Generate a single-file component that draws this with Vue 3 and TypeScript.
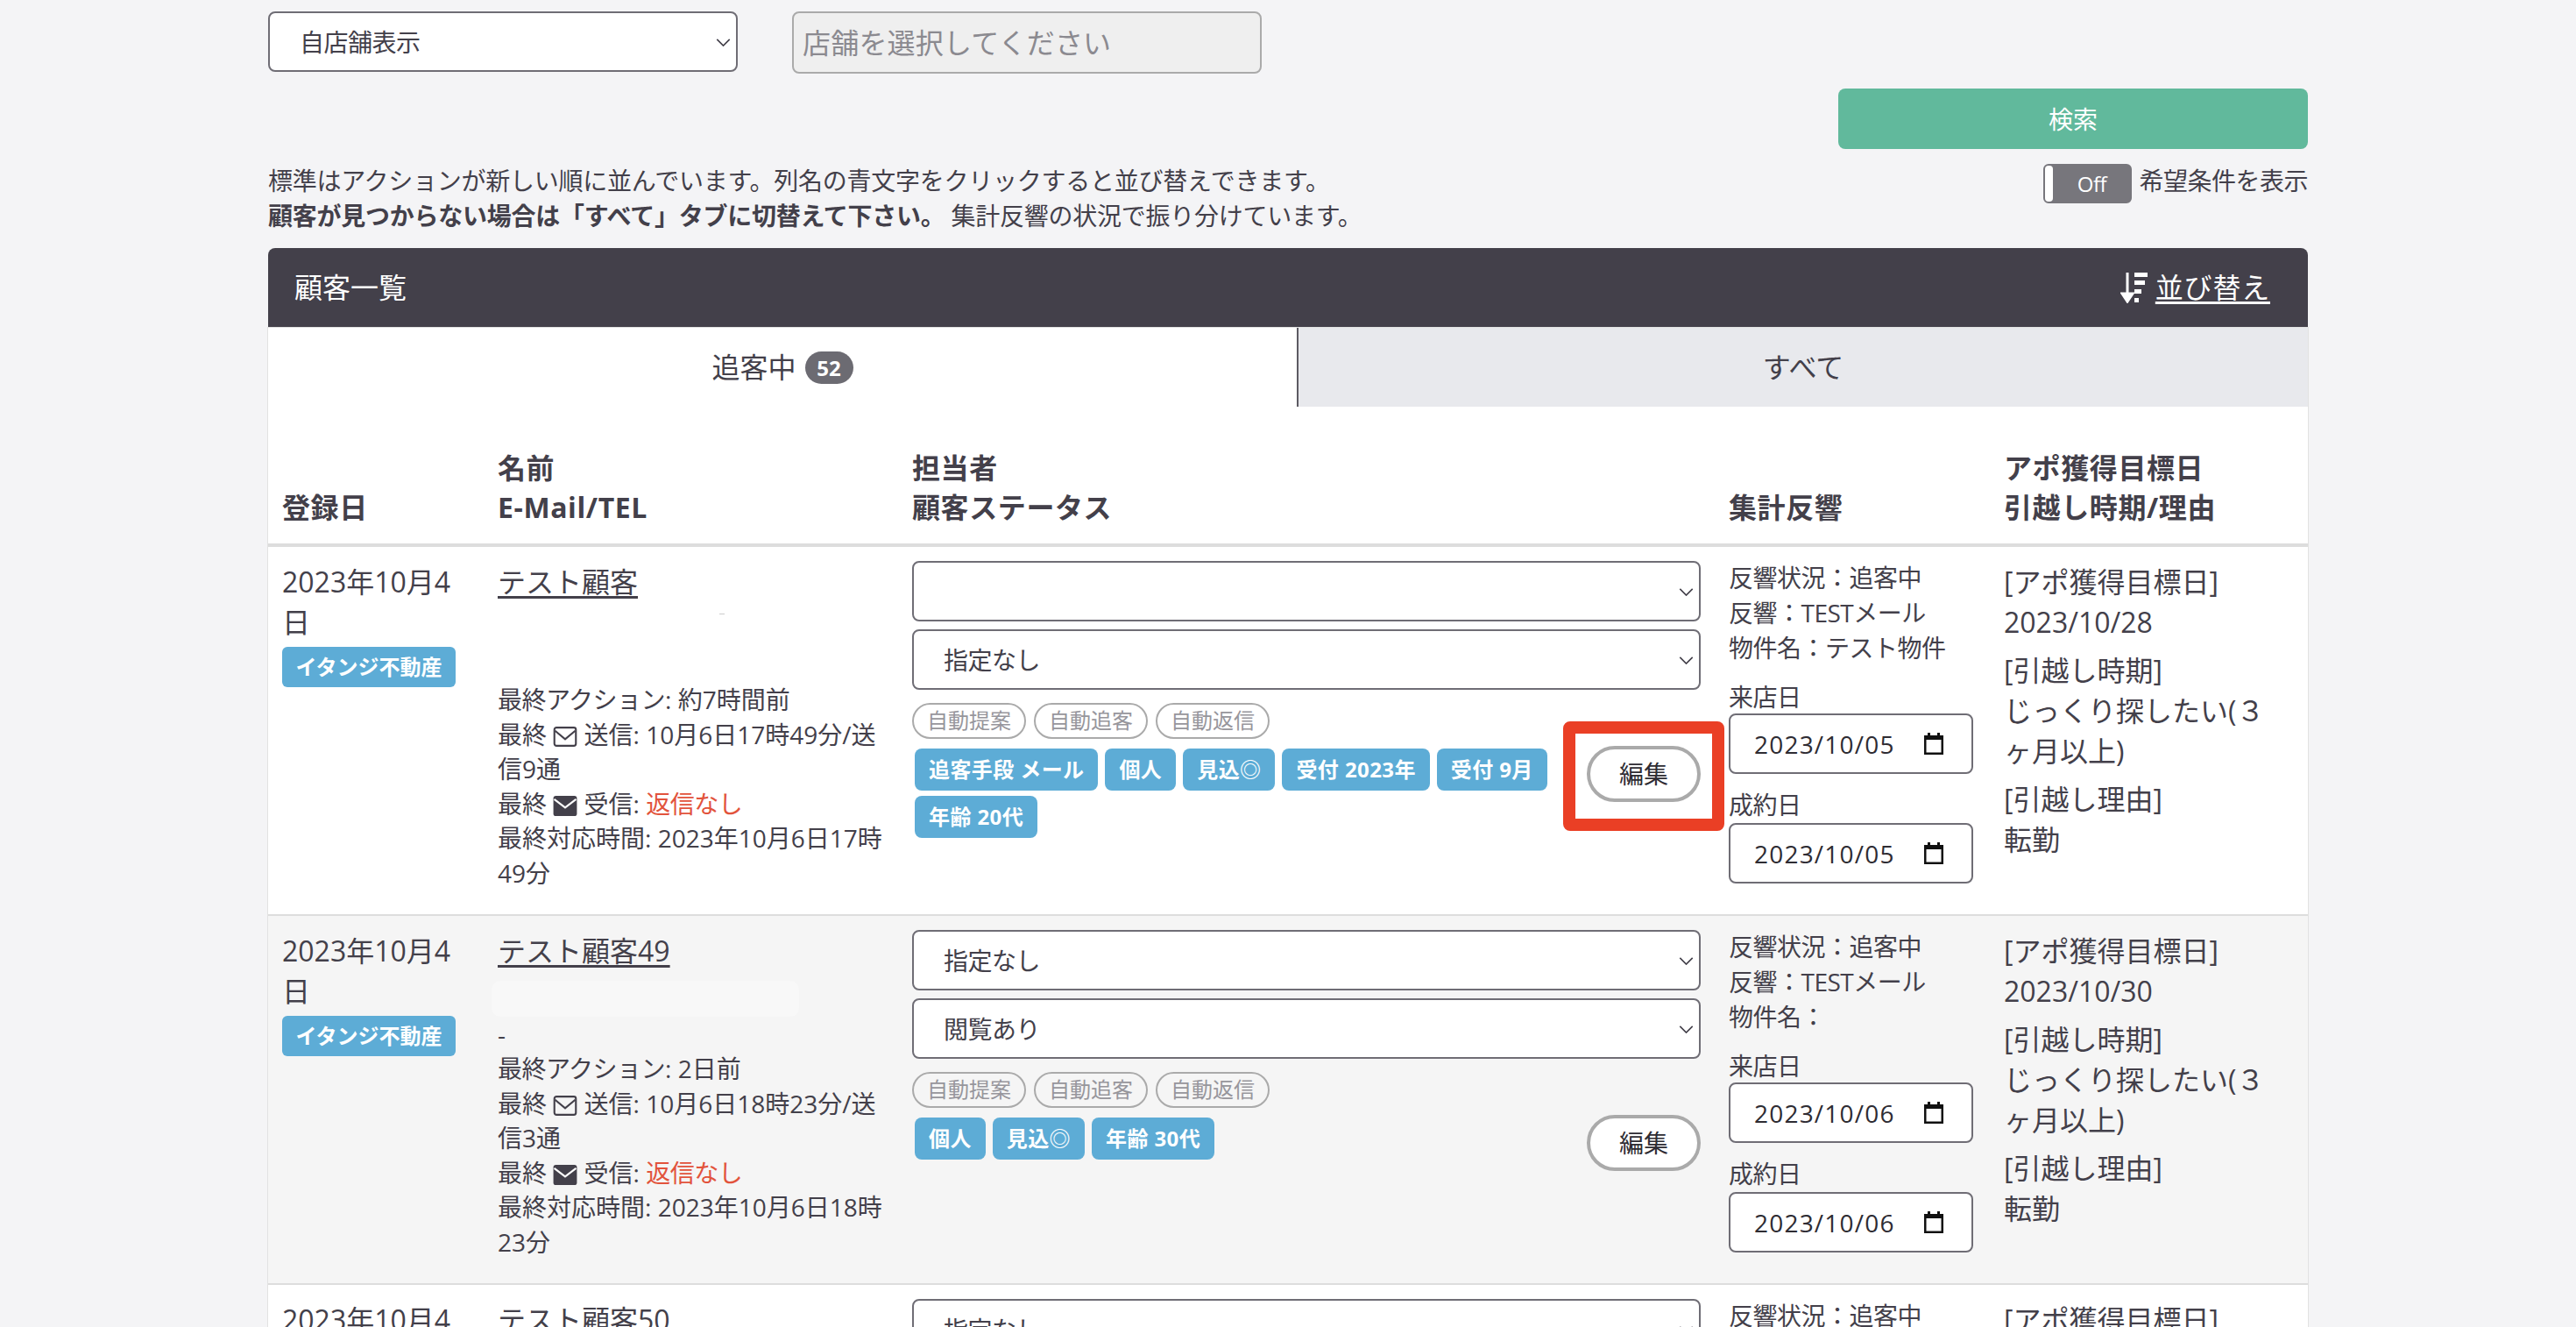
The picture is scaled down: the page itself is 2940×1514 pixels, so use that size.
<script setup lang="ts">
interface CustomerRow {
  date: string
  name: string
  tel: string
  masked: boolean
  action: string
  sent: string
  received: string
  staff: string
  status: string
  tags: string[]
  highlight: boolean
  property: string
  visit: string
  contract: string
  target: string
}

const autoLabels = ['自動提案', '自動追客', '自動返信']

const rows: CustomerRow[] = [
  {
    date: '2023年10月4日',
    name: 'テスト顧客',
    tel: '',
    masked: false,
    action: '約7時間前',
    sent: '10月6日17時49分/送信9通',
    received: '2023年10月6日17時49分',
    staff: '',
    status: '指定なし',
    tags: ['追客手段 メール', '個人', '見込◎', '受付 2023年', '受付 9月', '年齢 20代'],
    highlight: true,
    property: 'テスト物件',
    visit: '2023/10/05',
    contract: '2023/10/05',
    target: '2023/10/28',
  },
  {
    date: '2023年10月4日',
    name: 'テスト顧客49',
    tel: '-',
    masked: true,
    action: '2日前',
    sent: '10月6日18時23分/送信3通',
    received: '2023年10月6日18時23分',
    staff: '指定なし',
    status: '閲覧あり',
    tags: ['個人', '見込◎', '年齢 30代'],
    highlight: false,
    property: '',
    visit: '2023/10/06',
    contract: '2023/10/06',
    target: '2023/10/30',
  },
  {
    date: '2023年10月4日',
    name: 'テスト顧客50',
    tel: '-',
    masked: true,
    action: '2日前',
    sent: '10月6日18時23分/送信3通',
    received: '2023年10月6日18時23分',
    staff: '指定なし',
    status: '閲覧あり',
    tags: ['個人', '見込◎'],
    highlight: false,
    property: '',
    visit: '2023/10/06',
    contract: '2023/10/06',
    target: '2023/10/30',
  },
]
</script>

<template>
  <div class="page">
    <div class="filters">
      <div class="select-wrap filter-select">
        <select class="select">
          <option>自店舗表示</option>
        </select>
        <svg class="chevron" viewBox="0 0 18 10"><path d="M1 1l8 8 8-8" /></svg>
      </div>
      <input class="shop-input" placeholder="店舗を選択してください" disabled />
    </div>

    <div class="search-row">
      <button type="button" class="search-btn">検索</button>
    </div>

    <div class="info-row">
      <div class="notes">
        <div>標準はアクションが新しい順に並んでいます。列名の青文字をクリックすると並び替えできます。</div>
        <div><strong>顧客が見つからない場合は「すべて」タブに切替えて下さい。</strong> 集計反響の状況で振り分けています。</div>
      </div>
      <div class="toggle-wrap">
        <div class="toggle"><span class="toggle-knob"></span><span class="toggle-text">Off</span></div>
        <span>希望条件を表示</span>
      </div>
    </div>

    <div class="panel-head">
      <span>顧客一覧</span>
      <a class="sort-link">
        <svg class="sort-icon" viewBox="0 0 32 36">
          <path d="M8 1v28M2 25l6 9 6-9z" />
          <rect x="16" y="1" width="15" height="5" />
          <rect x="16" y="10" width="12" height="5" />
          <rect x="16" y="20" width="8" height="5" />
          <rect x="16" y="30" width="5" height="5" />
        </svg>
        <span class="sort-text">並び替え</span>
      </a>
    </div>

    <div class="panel-body">
      <div class="tabs">
        <div class="tab tab-active">追客中 <span class="badge">52</span></div>
        <div class="tab">すべて</div>
      </div>

      <div class="grid head">
        <div>登録日</div>
        <div>名前<br />E-Mail/TEL</div>
        <div>担当者<br />顧客ステータス</div>
        <div>集計反響</div>
        <div>アポ獲得目標日<br />引越し時期/理由</div>
      </div>

      <div v-for="(row, i) in rows" :key="row.name" class="grid row" :class="{ 'row-alt': i % 2 === 1 }">
        <div class="cell-large">
          <div>{{ row.date }}</div>
          <span class="shop-tag">イタンジ不動産</span>
        </div>

        <div>
          <div class="name-line"><a class="name">{{ row.name }}</a></div>
          <div class="contact" :class="{ 'contact-masked': row.masked }">
            <span class="mask"></span>
            <div v-if="row.tel">{{ row.tel }}</div>
          </div>
          <div class="history">
            <div><span class="wide">最終アクション</span>: {{ row.action }}</div>
            <div>
              最終
              <svg class="mail" viewBox="0 0 28 24"><rect x="1.2" y="1.2" width="25.6" height="21.6" rx="2.5" /><path d="M2 5l12 10 12-10" /></svg>
              送信: {{ row.sent }}
            </div>
            <div>
              最終
              <svg class="mail mail-solid" viewBox="0 0 28 24"><rect x="0" y="0" width="28" height="24" rx="3" /><path d="M1 4l13 10 13-10" /></svg>
              受信: <span class="no-reply wide">返信なし</span>
            </div>
            <div>最終対応時間: {{ row.received }}</div>
          </div>
        </div>

        <div class="status-cell">
          <div class="select-wrap">
            <select class="select"><option>{{ row.staff }}</option></select>
            <svg class="chevron" viewBox="0 0 18 10"><path d="M1 1l8 8 8-8" /></svg>
          </div>
          <div class="select-wrap second">
            <select class="select"><option>{{ row.status }}</option></select>
            <svg class="chevron" viewBox="0 0 18 10"><path d="M1 1l8 8 8-8" /></svg>
          </div>
          <div class="tag-area">
            <div class="tag-list">
              <div class="autos">
                <span v-for="label in autoLabels" :key="label" class="auto">{{ label }}</span>
              </div>
              <div class="tags">
                <span v-for="tag in row.tags" :key="tag" class="tag">{{ tag }}</span>
              </div>
            </div>
            <div class="edit-wrap">
              <button type="button" class="edit-btn">編集</button>
              <span v-if="row.highlight" class="callout"></span>
            </div>
          </div>
        </div>

        <div>
          <div>反響状況：追客中</div>
          <div>反響：TESTメール</div>
          <div>物件名：{{ row.property }}</div>
          <div class="date-label">来店日</div>
          <div class="date-box">
            <span>{{ row.visit }}</span>
            <svg class="calendar" viewBox="0 0 22 25"><path d="M4 0h3v3h8V0h3v3h4v22H0V3h4z" /><rect x="2.5" y="8" width="17" height="14.5" /></svg>
          </div>
          <div class="date-label second-date">成約日</div>
          <div class="date-box">
            <span>{{ row.contract }}</span>
            <svg class="calendar" viewBox="0 0 22 25"><path d="M4 0h3v3h8V0h3v3h4v22H0V3h4z" /><rect x="2.5" y="8" width="17" height="14.5" /></svg>
          </div>
        </div>

        <div class="cell-large">
          <p>[アポ獲得目標日]<br />{{ row.target }}</p>
          <p>[引越し時期]<br />じっくり探したい(３<br />ヶ月以上)</p>
          <p>[引越し理由]<br />転勤</p>
        </div>
      </div>
    </div>
  </div>
</template>

<style>
html,
body {
  margin: 0;
  background: #f4f4f6;
}
</style>

<style scoped>
.page {
  height: 1514px;
  overflow: hidden;
  box-sizing: border-box;
  padding: 13px 306px 0;
  background: #f4f4f6;
  color: #43404a;
  font-family: "Open Sans", "Noto Sans CJK JP", sans-serif;
  font-size: 28px;
  line-height: 40px;
  letter-spacing: -0.5px;
}

/* Filters */
.filters {
  display: flex;
  gap: 62px;
  align-items: flex-start;
}
.filter-select {
  width: 536px;
}
.select-wrap {
  position: relative;
}
.select {
  display: block;
  width: 100%;
  height: 69px;
  box-sizing: border-box;
  padding: 0 50px 0 34px;
  appearance: none;
  background: #fff;
  border: 2px solid #6f6d75;
  border-radius: 8px;
  color: #43404a;
  font: inherit;
  letter-spacing: inherit;
}
.second {
  margin-top: 9px;
}
.chevron {
  position: absolute;
  right: 8px;
  top: 31px;
  width: 17px;
  height: 9px;
  fill: none;
  stroke: #43404a;
  stroke-width: 1.8;
}
.shop-input {
  width: 536px;
  height: 71px;
  box-sizing: border-box;
  padding: 0 10px;
  background: #efefef;
  border: 2px solid #aaa;
  border-radius: 8px;
  font-family: inherit;
  font-size: 32px;
  letter-spacing: 0.2px;
}
.shop-input::placeholder {
  color: #8b8a90;
  opacity: 1;
}

.search-row {
  display: flex;
  justify-content: flex-end;
  margin-top: 17px;
}
.search-btn {
  width: 536px;
  height: 69px;
  padding: 0;
  background: #61b99c;
  border: 0;
  border-radius: 8px;
  color: #fff;
  font: inherit;
}

.info-row {
  display: flex;
  justify-content: space-between;
  align-items: flex-start;
  margin-top: 16px;
}
.notes {
  letter-spacing: -0.25px;
}
.toggle-wrap {
  display: flex;
  gap: 8px;
  align-items: flex-start;
}
.toggle {
  display: flex;
  align-items: center;
  width: 101px;
  height: 45px;
  box-sizing: border-box;
  margin-top: 1px;
  border: 2px solid #77767c;
  border-radius: 6px;
  background: #77767c;
  color: #fff;
  font-size: 24px;
}
.toggle-knob {
  width: 9px;
  height: 100%;
  background: #fff;
  border-radius: 4px;
}
.toggle-text {
  flex: 1;
  text-align: center;
}

/* Panel */
.panel-head {
  display: flex;
  justify-content: space-between;
  align-items: center;
  height: 91px;
  box-sizing: border-box;
  margin-top: 17px;
  padding: 0 43px 2px 30px;
  background: #43404a;
  border-radius: 8px 8px 0 0;
  color: #fff;
  font-size: 32px;
  letter-spacing: 0;
}
.sort-link {
  display: flex;
  align-items: center;
  gap: 8px;
}
.sort-icon {
  width: 32px;
  height: 36px;
  fill: #fff;
  stroke: none;
}
.sort-icon path {
  stroke: #fff;
  stroke-width: 3;
}
.sort-text {
  letter-spacing: 0.8px;
  text-decoration: underline;
  text-underline-offset: 4px;
}
.panel-body {
  background: #fff;
  box-shadow: 0 0 0 1px #e2e2e2;
}
.tabs {
  display: flex;
  height: 90px;
  font-size: 32px;
  letter-spacing: 0;
}
.tab {
  flex: 1;
  display: flex;
  justify-content: center;
  align-items: center;
  gap: 10px;
  background: #e8e9ed;
}
.tab-active {
  flex: 0 0 1176px;
  background: #fff;
  box-sizing: border-box;
  border-right: 2px solid #5c5a62;
}
.badge {
  display: inline-block;
  width: 55px;
  height: 37px;
  background: #6c6b72;
  border-radius: 19px;
  color: #fff;
  font-size: 24px;
  font-weight: 700;
  line-height: 37px;
  text-align: center;
}

.grid {
  display: grid;
  grid-template-columns: 246px 473px 932px 314px 1fr;
}
.grid > div {
  padding: 0 16px;
  min-width: 0;
}
.head {
  height: 160px;
  box-sizing: border-box;
  align-items: end;
  padding-bottom: 19px;
  border-bottom: 4px solid #ddd;
  font-size: 32px;
  font-weight: 700;
  line-height: 45px;
  letter-spacing: 0.6px;
}
.row {
  height: 421px;
  box-sizing: border-box;
  border-bottom: 2px solid #ddd;
  padding-top: 15px;
  background: #fff;
}
.row-alt {
  background: #f5f5f5;
}
.cell-large {
  margin-top: 2px;
  font-size: 32px;
  line-height: 46px;
  letter-spacing: 0;
}
.shop-tag {
  display: block;
  width: 198px;
  height: 46px;
  margin-top: 5px;
  background: #5dacd6;
  border-radius: 6px;
  color: #fff;
  font-size: 24px;
  font-weight: 700;
  line-height: 46px;
  text-align: center;
}
.name-line {
  margin-top: 2px;
  line-height: 46px;
}
.name {
  font-size: 32px;
  letter-spacing: 0;
  text-decoration: underline;
  text-underline-offset: 4px;
}
.contact {
  position: relative;
  height: 91px;
  display: flex;
  align-items: flex-end;
}
.mask {
  position: absolute;
  left: 253px;
  top: 12px;
  width: 6px;
  height: 1px;
  background: #ccc;
}
.contact-masked .mask {
  left: -7px;
  top: 10px;
  width: 351px;
  height: 41px;
  background: #f8f8f8;
  border-radius: 10px;
}
/* palt here keeps the long date lines wrapping where the original wraps */
.history {
  font-feature-settings: "palt";
  letter-spacing: 0;
  line-height: 39.6px;
}
.wide {
  font-feature-settings: normal;
  letter-spacing: -0.5px;
}
.history .mail {
  width: 28px;
  height: 23px;
  vertical-align: -3px;
  fill: none;
  stroke: #43404a;
  stroke-width: 2.2;
}
.history .mail-solid rect {
  fill: #43404a;
  stroke: none;
}
.history .mail-solid path {
  stroke: #fff;
}
.no-reply {
  color: #e2533c;
}

/* Tags */
.status-cell {
  margin-top: 1px;
}
.tag-area {
  display: flex;
  justify-content: space-between;
  align-items: flex-start;
  margin-top: 15px;
}
.tag-list {
  width: 730px;
  letter-spacing: 0;
}
.autos {
  display: flex;
  gap: 9px;
}
.auto {
  height: 41px;
  box-sizing: border-box;
  padding: 0 15px;
  border: 2px solid #aaa;
  border-radius: 21px;
  color: #97969c;
  font-size: 24px;
  line-height: 36px;
}
.tags {
  display: flex;
  flex-wrap: wrap;
  gap: 6px 8px;
  margin: 11px 0 0 3px;
}
.tag {
  height: 48px;
  padding: 0 16px;
  background: #5dacd6;
  border-radius: 8px;
  color: #fff;
  font-size: 24px;
  font-weight: 700;
  line-height: 48px;
  letter-spacing: 0.4px;
}
.edit-wrap {
  position: relative;
  margin-top: 49px;
}
.edit-btn {
  display: block;
  width: 130px;
  height: 64px;
  padding: 0;
  background: #fff;
  border: 4px solid #aaa;
  border-radius: 32px;
  color: #2e2c33;
  font: inherit;
}
.callout {
  position: absolute;
  inset: -28px -27px -33px -27px;
  border: 14px solid #ea3f25;
  border-radius: 8px;
}

/* Dates */
.date-label {
  margin-top: 16px;
  margin-bottom: -1px;
}
.second-date {
  margin-top: 15px;
  margin-bottom: 1px;
}
.date-box {
  display: flex;
  justify-content: space-between;
  align-items: center;
  width: 279px;
  height: 69px;
  box-sizing: border-box;
  padding: 0 32px 0 27px;
  background: #fff;
  border: 2px solid #6f6d75;
  border-radius: 8px;
  color: #2e2c33;
  letter-spacing: 1.2px;
}
.calendar {
  width: 22px;
  height: 25px;
  fill: #111;
}
.calendar rect {
  fill: #fff;
}
p {
  margin: 0 0 9px;
}
</style>
